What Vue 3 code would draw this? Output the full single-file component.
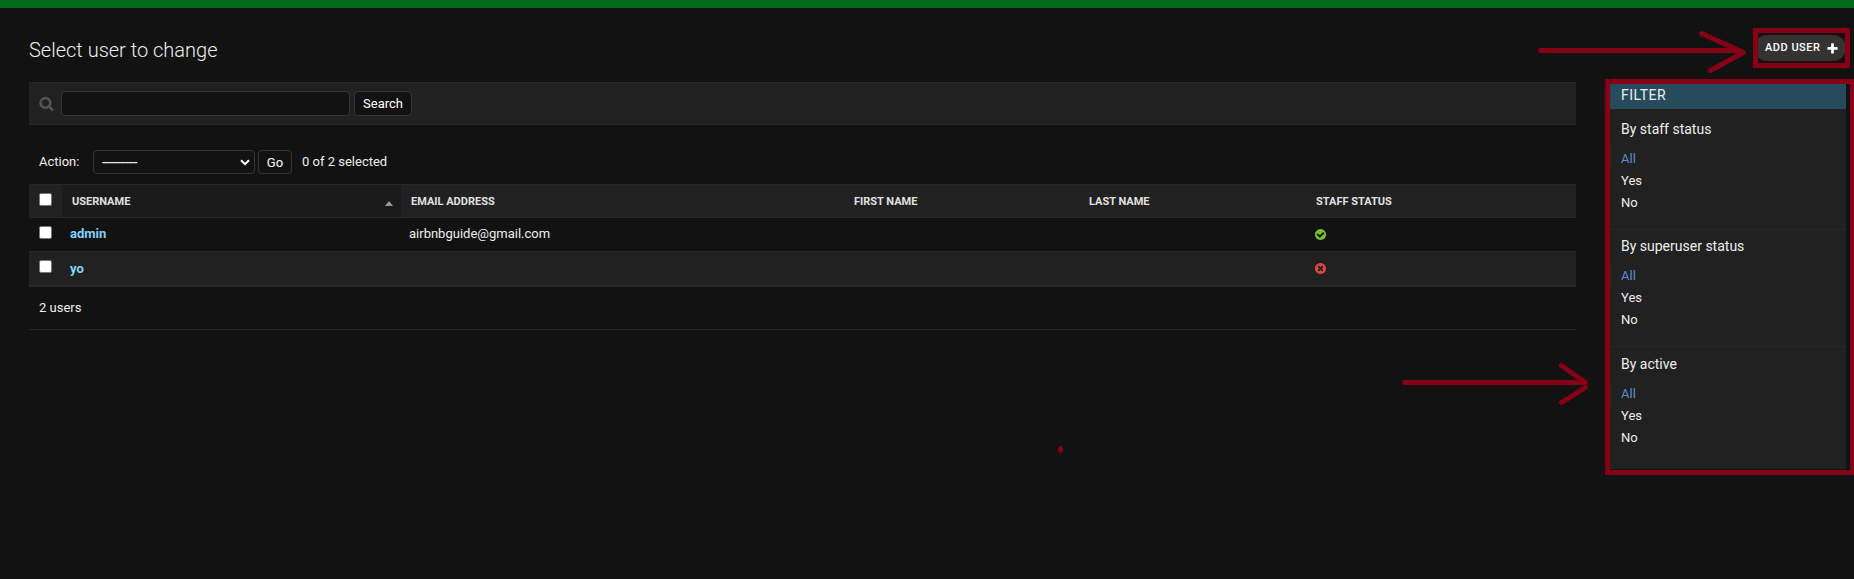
<script setup>
const disc =
  'q0 209-103 385.5t-279.5 279.5-385.5 103-385.5-103-279.5-279.5-103-385.5 103-385.5 279.5-279.5 385.5-103 385.5 103 279.5 279.5 103 385.5z'
const yesIcon =
  'M1412 734q0-28-18-46l-91-90q-19-19-45-19t-45 19l-408 407-226-226q-19-19-45-19t-45 19l-91 90q-18 18-18 46 0 27 18 45l362 362q19 19 45 19 27 0 46-19l543-543q18-18 18-45zm252 162' + disc
const noIcon =
  'M1277 1122q0-26-19-45l-181-181 181-181q19-19 19-45 0-27-19-46l-90-90q-19-19-46-19-26 0-45 19l-181 181-181-181q-19-19-45-19-27 0-46 19l-90 90q-19 19-19 46 0 26 19 45l181 181-181 181q-19 19-19 45 0 27 19 46l90 90q19 19 46 19 26 0 45-19l181-181 181 181q19 19 45 19 27 0 46-19l90-90q19-19 19-46zm387-226' + disc

const users = [
  { name: 'admin', email: 'airbnbguide@gmail.com', staff: true },
  { name: 'yo', email: '', staff: false },
]
const filters = ['By staff status', 'By superuser status', 'By active']
</script>

<template>
  <div class="page">
    <div class="topbar"></div>
    <header class="title-row">
      <h1>Select user to change</h1>
      <a class="add-link">
        <span>Add user</span>
        <svg width="13" height="13" viewBox="0 0 1792 1792"><path fill="#fff" d="M1600 796v192q0 40-28 68t-68 28h-416v416q0 40-28 68t-68 28h-192q-40 0-68-28t-28-68v-416h-416q-40 0-68-28t-28-68v-192q0-40 28-68t68-28h416v-416q0-40 28-68t68-28h192q40 0 68 28t28 68v416h416q40 0 68 28t28 68z" /></svg>
      </a>
    </header>

    <div class="columns">
      <main>
        <div class="toolbar">
          <svg class="lens" width="15" height="15" viewBox="0 0 1792 1792"><path fill="#555" stroke="#555" stroke-width="40" d="M1216 832q0-185-131.5-316.5t-316.5-131.5-316.5 131.5-131.5 316.5 131.5 316.5 316.5 131.5 316.5-131.5 131.5-316.5zm512 832q0 52-38 90t-90 38q-54 0-90-38l-343-342q-179 124-399 124-143 0-273.5-55.5t-225-150-150-225-55.5-273.5 55.5-273.5 150-225 225-150 273.5-55.5 273.5 55.5 225 150 150 225 55.5 273.5q0 220-124 399l343 343q37 37 37 90z" /></svg>
          <input class="query" type="text" />
          <button class="btn search">Search</button>
        </div>

        <div class="actions">
          <span class="label">Action:</span>
          <div class="select">
            <span class="dashes">---------</span>
            <svg width="10" height="7" viewBox="0 0 10 7"><path d="M1 1.2 5 5.2 9 1.2" fill="none" stroke="#fff" stroke-width="2" /></svg>
          </div>
          <button class="btn go">Go</button>
          <span class="count">0 of 2 selected</span>
        </div>

        <div class="table">
          <div class="row head">
            <div class="cell tick"><i class="box"></i></div>
            <div class="cell sorted"><span>Username</span><i class="asc"></i></div>
            <div class="cell">Email address</div>
            <div class="cell">First name</div>
            <div class="cell">Last name</div>
            <div class="cell">Staff status</div>
          </div>
          <div v-for="u in users" :key="u.name" class="row body">
            <div class="cell tick"><i class="box"></i></div>
            <div class="cell name">{{ u.name }}</div>
            <div class="cell">{{ u.email }}</div>
            <div class="cell"></div>
            <div class="cell"></div>
            <div class="cell status">
              <svg width="13" height="13" viewBox="0 0 1792 1792"><path :fill="u.staff ? '#70bf2b' : '#dd4646'" :d="u.staff ? yesIcon : noIcon" /></svg>
            </div>
          </div>
        </div>
        <p class="paginator">2 users</p>
      </main>

      <aside>
        <h2>Filter</h2>
        <section v-for="f in filters" :key="f">
          <h3>{{ f }}</h3>
          <ul>
            <li class="selected">All</li>
            <li>Yes</li>
            <li>No</li>
          </ul>
        </section>
      </aside>
    </div>

    <svg class="marks" width="1854" height="579" viewBox="0 0 1854 579">
      <g fill="none" stroke="#880015" stroke-width="5">
        <rect x="1755.5" y="30.5" width="92" height="35" />
        <rect x="1607.5" y="81.5" width="245" height="391" />
        <g stroke-linecap="round" stroke-linejoin="round">
          <path d="M1540.5 50.5H1738M1701.5 33.5 1743.5 52.5 1710.5 70.5" />
          <path d="M1404.5 382.5H1585M1561.5 365.5 1585.5 382.5M1561.5 402.5 1585.5 387.5" />
        </g>
      </g>
      <ellipse cx="1060.5" cy="449.5" rx="2.5" ry="3.5" fill="#880015" />
    </svg>
  </div>
</template>

<style>
body {
  background: #121212;
}
</style>

<style scoped>
.page {
  position: relative;
  width: 1854px;
  height: 579px;
  overflow: hidden;
  box-sizing: border-box;
  background: #121212;
  color: #eee;
  font-family: Roboto, sans-serif;
  font-size: 13px;
}
.page * {
  box-sizing: border-box;
}
.topbar {
  height: 8px;
  background: #006b1b;
}
.title-row {
  display: flex;
  justify-content: space-between;
  align-items: flex-start;
  height: 74px;
  padding: 27px 8px 0 29px;
}
h1 {
  margin: 3px 0 0;
  font-size: 20px;
  font-weight: 300;
  line-height: 24px;
}
.add-link {
  display: flex;
  align-items: center;
  justify-content: space-between;
  width: 92px;
  height: 26px;
  padding: 0 7px 2px 11px;
  border-radius: 13px;
  background: #333;
  color: #fff;
  font-size: 11px;
  font-weight: 500;
  letter-spacing: 0.5px;
  text-transform: uppercase;
  white-space: nowrap;
}
.add-link svg {
  position: relative;
  top: 1px;
}
.columns {
  display: flex;
  align-items: flex-start;
  gap: 30px;
  padding-left: 29px;
}
main {
  width: 1547px;
}
.toolbar {
  display: flex;
  align-items: center;
  height: 43px;
  padding-left: 10px;
  border: solid #272727;
  border-width: 1px 0;
  background: #212121;
}
.lens {
  margin-right: 7px;
}
.query {
  width: 289px;
  height: 25px;
  margin: 0 4px 0 0;
  border: 1px solid #353535;
  border-radius: 4px;
  background: #121212;
}
.btn {
  height: 25px;
  padding: 0;
  border: 1px solid #353535;
  border-radius: 4px;
  background: #121212;
  color: #fff;
  font-family: inherit;
  font-size: 13px;
  text-align: center;
}
.search {
  width: 58px;
}
.actions {
  display: flex;
  align-items: flex-start;
  height: 59px;
  padding: 25px 0 0 10px;
  line-height: 15px;
}
.label {
  width: 54px;
  margin-top: 4px;
}
.select {
  display: flex;
  align-items: center;
  justify-content: space-between;
  width: 162px;
  height: 24px;
  margin: 0 3px 0 0;
  padding: 0 4px 0 8px;
  border: 1px solid #353535;
  border-radius: 4px;
}
.dashes {
  font-size: 16.5px;
  letter-spacing: -0.7px;
}
.btn.go {
  width: 34px;
  height: 24px;
  padding-top: 1px;
}
.count {
  margin: 4px 0 0 10px;
}
.row {
  display: grid;
  grid-template-columns: 33px 339px 443px 235px 227px 270px;
}
.head {
  height: 34px;
  border: solid #272727;
  border-width: 1px 0;
  background: #212121;
  color: #e0e0e0;
  font-size: 11px;
  font-weight: 700;
  text-transform: uppercase;
}
.head .cell {
  padding: 10px 0 0 10px;
  line-height: 14px;
}
.head .sorted {
  display: flex;
  justify-content: space-between;
  padding-right: 8px;
  background: #1b1b1b;
}
.asc {
  width: 0;
  height: 0;
  margin-top: 6px;
  border: solid transparent;
  border-width: 0 4px 5px;
  border-bottom-color: #999;
}
.body {
  height: 33px;
}
.body:last-child {
  height: 36px;
  border-top: 1px solid #272727;
  border-bottom: 2px solid #282828;
  background: #212121;
}
.body .cell {
  padding: 8px 0 0 8px;
  line-height: 16px;
}
.body:last-child .name {
  padding-top: 9px;
}
.head .tick,
.body .tick {
  padding: 8px 0 0 10px;
}
.box {
  display: block;
  width: 13px;
  height: 13px;
  border: 1px solid #767676;
  border-radius: 2px;
  background: #fff;
}
.body .name {
  color: #81d4fa;
  font-weight: 700;
}
.body .status {
  padding-top: 10px;
}
.status svg {
  display: block;
}
.paginator {
  height: 43px;
  margin: 0;
  padding: 13px 0 0 10px;
  border-bottom: 1px solid #272727;
  line-height: 16px;
}
aside {
  width: 240px;
  height: 387px;
  background: #212121;
}
h2 {
  height: 27px;
  margin: 0 0 3px;
  padding: 5px 15px 0;
  background: #264b5d;
  font-size: 14px;
  font-weight: 400;
  line-height: 16px;
  letter-spacing: 0.5px;
  text-transform: uppercase;
}
section {
  height: 117px;
}
section + section {
  border-top: 1px solid #272727;
}
section + section h3 {
  padding-top: 8px;
}
section:last-child h3 {
  padding-top: 9px;
}
h3 {
  margin: 0;
  padding: 9px 15px 11px;
  font-size: 14px;
  font-weight: 400;
  line-height: 16px;
}
ul {
  margin: 0;
  padding: 0;
  list-style: none;
}
li {
  height: 22px;
  padding-left: 15px;
  line-height: 22px;
}
.selected {
  padding-left: 10px;
  border-left: 5px solid #272727;
  color: #5f8bd0;
}
.marks {
  position: absolute;
  top: 0;
  left: 0;
  pointer-events: none;
}
</style>
